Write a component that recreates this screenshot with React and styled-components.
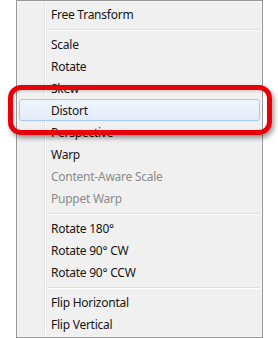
import React from "react";
import styled, { createGlobalStyle } from "styled-components";

const Global = createGlobalStyle`
  html, body { margin: 0; padding: 0; background: #ffffff; }
  body { font-family: "Noto Sans", "Open Sans", sans-serif; }
`;

const Page = styled.div`
  position: relative;
  width: 278px;
  height: 338px;
  overflow: hidden;
  background: #ffffff;
`;

const Menu = styled.div`
  position: relative;
  margin-left: 16px;
  width: 247px;
  height: 338px;
  box-sizing: border-box;
  border: 1px solid #979797;
  background: #f0f0f0;
  padding: 2px;
  box-shadow: inset 0 0 0 1px #f5f5f5;
  display: flex;
  flex-direction: column;
  &::before {
    content: "";
    position: absolute;
    top: 2px;
    bottom: 2px;
    left: 27px;
    width: 1px;
    background: #e2e3e3;
    box-shadow: 1px 0 0 #ffffff;
  }
`;

const Item = styled.div`
  position: relative;
  height: 22px;
  flex: 0 0 22px;
  display: flex;
  align-items: center;
  padding-left: 31px;
  font-size: 12px;
  letter-spacing: -0.25px;
  color: ${(p) => (p.$disabled ? "#8b8b8b" : "#151515")};
  border: 1px solid ${(p) => (p.$active ? "#a8c9f0" : "transparent")};
  border-radius: 3px;
  background: ${(p) =>
    p.$active ? "linear-gradient(#eef4fb, #e3ecf8)" : "transparent"};
  box-sizing: border-box;
  white-space: nowrap;
  z-index: 1;
`;

const Separator = styled.div`
  flex: 0 0 8px;
  display: flex;
  align-items: center;
  padding-left: 28px;
  padding-right: 1px;
  &::after {
    content: "";
    flex: 1;
    height: 1px;
    background: #e0e0e0;
    box-shadow: 0 1px 0 #ffffff;
  }
`;

const Callout = styled.div`
  position: absolute;
  left: 8px;
  top: 85px;
  width: 264px;
  height: 50px;
  box-sizing: border-box;
  border: 5px solid #e5000a;
  border-radius: 13px;
  box-shadow: 2px 3px 5px rgba(0, 0, 0, 0.4), inset 1px 1px 3px rgba(0, 0, 0, 0.2);
  pointer-events: none;
  z-index: 5;
`;

const groups = [
  [{ t: "Free Transform" }],
  [
    { t: "Scale" },
    { t: "Rotate" },
    { t: "Skew" },
    { t: "Distort", active: true },
    { t: "Perspective" },
    { t: "Warp" },
    { t: "Content-Aware Scale", disabled: true },
    { t: "Puppet Warp", disabled: true },
  ],
  [{ t: "Rotate 180°" }, { t: "Rotate 90° CW" }, { t: "Rotate 90° CCW" }],
  [{ t: "Flip Horizontal" }, { t: "Flip Vertical" }],
];

export default function App() {
  return (
    <Page>
      <Global />
      <Menu>
        {groups.map((g, gi) => (
          <React.Fragment key={gi}>
            {gi > 0 && <Separator />}
            {g.map((it) => (
              <Item key={it.t} $active={it.active} $disabled={it.disabled}>
                {it.t}
              </Item>
            ))}
          </React.Fragment>
        ))}
      </Menu>
      <Callout />
    </Page>
  );
}
